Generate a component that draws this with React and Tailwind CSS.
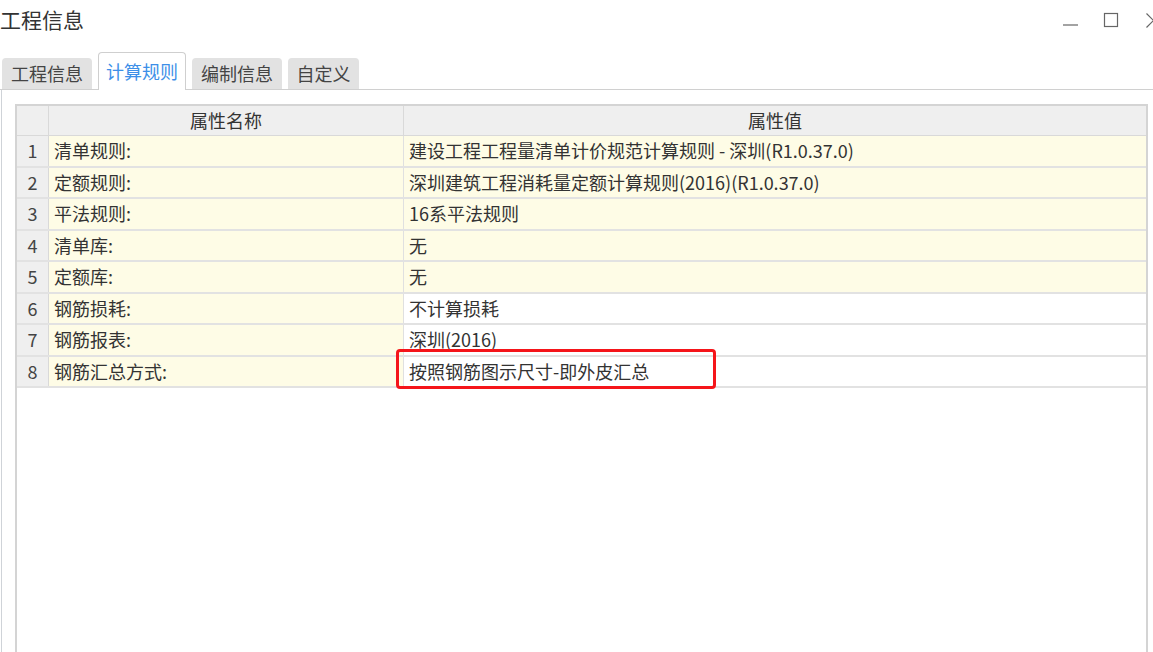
import React from "react";

const rows = [
  ["清单规则:", "建设工程工程量清单计价规范计算规则 - 深圳(R1.0.37.0)", true],
  ["定额规则:", "深圳建筑工程消耗量定额计算规则(2016)(R1.0.37.0)", true],
  ["平法规则:", "16系平法规则", true],
  ["清单库:", "无", true],
  ["定额库:", "无", true],
  ["钢筋损耗:", "不计算损耗", false],
  ["钢筋报表:", "深圳(2016)", false],
  ["钢筋汇总方式:", "按照钢筋图示尺寸-即外皮汇总", false],
];

const tabs = ["工程信息", "计算规则", "编制信息", "自定义"];

const App = () => {
  return (
    <div
      className="w-[1153px] h-[652px] bg-white overflow-hidden flex flex-col text-[#333]"
      style={{ fontFamily: '"Noto Sans CJK SC", "Noto Sans", sans-serif' }}
    >
      {/* Title bar */}
      <div className="h-[44px] flex items-start justify-between shrink-0">
        <div className="text-[21px] leading-none mt-[9px] text-[#333]">工程信息</div>
        <div className="flex items-start mt-[12px]">
          <svg width="16" height="16" viewBox="0 0 16 16" className="mr-[25px] mt-[1px]">
            <path d="M1 12h15" stroke="#666" strokeWidth="1.2" />
          </svg>
          <svg width="16" height="16" viewBox="0 0 16 16" className="mr-[27px]">
            <rect x="1.5" y="1.5" width="13" height="13" fill="none" stroke="#666" strokeWidth="1.2" />
          </svg>
          <svg width="7" height="16" viewBox="0 0 7 16">
            <path d="M0.5 1.5l7 7l-7 7" fill="none" stroke="#666" strokeWidth="1.2" />
          </svg>
        </div>
      </div>

      {/* Tabs */}
      <div className="flex items-end h-[46px] shrink-0 border-b border-[#d0d0d0] pl-[2px] gap-[6px]">
        {tabs.map((t, i) =>
          i === 1 ? (
            <div
              key={t}
              className="h-[38px] w-[88px] -mb-px bg-white border border-b-0 border-[#cfcfcf] rounded-t-[4px] flex items-center justify-center text-[18px] text-[#3d8fe8]"
            >
              {t}
            </div>
          ) : (
            <div
              key={t}
              className={`h-[31px] ${i === 3 ? "w-[71px]" : "w-[90px]"} bg-[#e2e2e2] rounded-t-[4px] flex items-center justify-center text-[18px] text-[#444]`}
            >
              {t}
            </div>
          )
        )}
      </div>

      {/* Panel */}
      <div className="flex-1 border-l border-[#cfd3d8] ml-px pt-[14px] pl-[13px] pr-[4px] flex flex-col">
        <div className="flex-1 w-[1133px] border-l-2 border-r-2 border-t-2 border-[#d4d4d4] flex flex-col text-[18px]">
          {/* Header */}
          <div className="flex h-[30px] bg-[#efefef] border-b border-[#d9d9d9]">
            <div className="w-[32px] border-r border-[#d9d9d9]" />
            <div className="w-[355px] border-r border-[#d9d9d9] flex items-center justify-center">属性名称</div>
            <div className="flex-1 flex items-center justify-center">属性值</div>
          </div>
          {rows.map(([name, value, cream], i) => (
            <div key={i} className="flex h-[31.5px] border-b-2 border-[#e2e2e2]">
              <div className="w-[32px] bg-[#efefef] border-r border-[#d9d9d9] flex items-center justify-center text-[#444]">
                {i + 1}
              </div>
              <div className="w-[355px] bg-[#fefce6] border-r border-[#e0e0e0] flex items-center pl-[5px]">
                {name}
              </div>
              <div className={`flex-1 flex items-center pl-[5px] ${cream ? "bg-[#fefce6]" : "bg-white"}`}>
                {i === 7 ? (
                  <span className="relative">
                    {value}
                    <span className="absolute -left-[13px] -top-[9px] w-[320px] h-[40px] border-[3px] border-[#f5151a] rounded-[4px]" />
                  </span>
                ) : (
                  value
                )}
              </div>
            </div>
          ))}
        </div>
      </div>
    </div>
  );
};

export default App;
